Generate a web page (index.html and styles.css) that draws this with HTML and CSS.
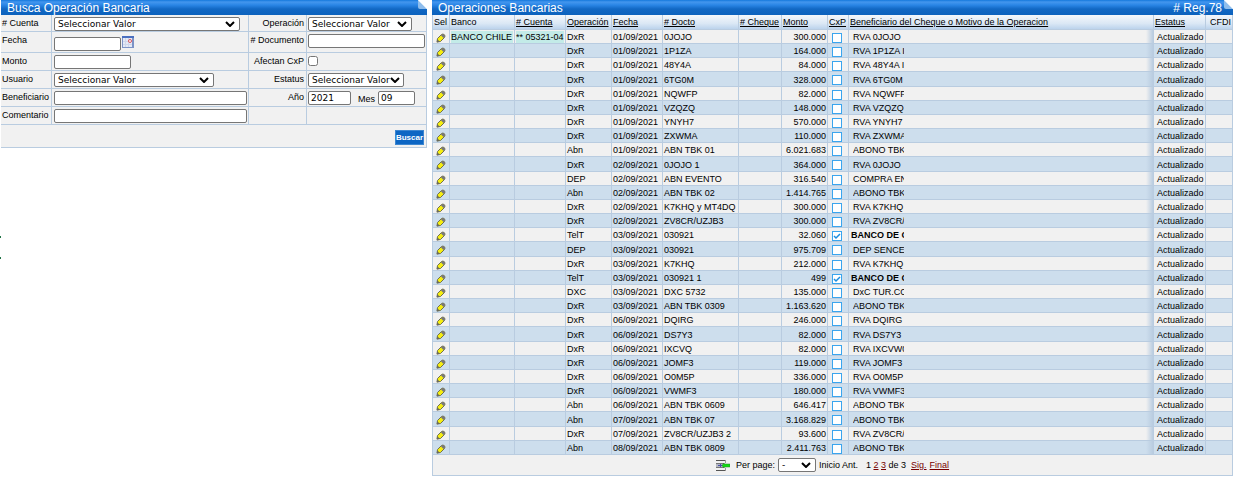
FILE: index.html
```html
<!DOCTYPE html>
<html lang="es">
<head>
    <meta charset="UTF-8">
    <meta name="viewport" content="width=device-width, initial-scale=1.0">
    <title>Operaciones Bancarias</title>
    <link rel="stylesheet" href="styles.css">
</head>
<body>
    <svg class="defs" aria-hidden="true">
        <symbol id="pencil" viewBox="0 0 10 10">
            <path d="M1 9l.5-3.500L5.500 1.500Q7 .5 8.300 1.700T8.500 4.500L4.500 8.500z" fill="#f6ee10" stroke="#6e6e50" stroke-width="1"/>
            <path d="M5.800 1.500Q7 .5 8.300 1.700T8.500 4.200L7.500 5 5 2.500z" fill="#77777c"/>
            <path d="M.7 9.400l.6-3.200 2.500 2.600z" fill="#6b6b5c"/>
        </symbol>
        <symbol id="fold" viewBox="0 0 9 9">
            <path d="M0 0h9v9z" fill="#fff"/>
            <path d="M0 0v7q0 2 2 2h7z" fill="#8fbdec"/>
            <path d="M0 0l9 9" stroke="#d5e7f8" stroke-width="1"/>
        </symbol>
    </svg>
    <div class="page">
        <div class="left">
            <form class="panel">
                <div class="title">
                    <h2>Busca Operación Bancaria</h2>
                    <svg class="fold"><use href="#fold"/></svg>
                </div>
                <table class="search">
                    <tr class="r17">
                        <td class="c1"><label for="cuenta"># Cuenta</label></td>
                        <td class="c2"><select id="cuenta" class="w-cuenta"><option>Seleccionar Valor</option></select></td>
                        <td class="c3"><label for="operacion">Operación</label></td>
                        <td class="c4"><select id="operacion" class="w-oper"><option>Seleccionar Valor</option></select></td>
                    </tr>
                    <tr class="r21">
                        <td class="c1"><label for="fecha">Fecha</label></td>
                        <td class="c2">
                            <div class="line">
                                <input type="text" id="fecha" class="w-fecha">
                                <button type="button" class="cal" aria-label="Calendario">
                                    <svg viewBox="0 0 12 12">
                                        <path d="M0 0h12v12H0z" fill="#7c93c6"/>
                                        <path d="M0 0h12v2H0z" fill="#4a6fc0"/>
                                        <path d="M1 2h9v9H1z" fill="#e4e9f5"/>
                                        <path d="M1 5.500h9M1 8.500h9M3.500 2v9M6.500 2v9" stroke="#cfd7ea" stroke-width="1"/>
                                        <circle cx="8" cy="5" r="1.500" fill="#fff" stroke="#d8545c"/>
                                    </svg>
                                </button>
                            </div>
                        </td>
                        <td class="c3"><label for="documento"># Documento</label></td>
                        <td class="c4"><input type="text" id="documento" class="full"></td>
                    </tr>
                    <tr class="r18">
                        <td class="c1"><label for="monto">Monto</label></td>
                        <td class="c2"><input type="text" id="monto" class="w-monto"></td>
                        <td class="c3"><label for="afectan">Afectan CxP</label></td>
                        <td class="c4"><input type="checkbox" id="afectan" class="chk"></td>
                    </tr>
                    <tr class="r18">
                        <td class="c1"><label for="usuario">Usuario</label></td>
                        <td class="c2"><select id="usuario" class="w-usuario"><option>Seleccionar Valor</option></select></td>
                        <td class="c3"><label for="estatus">Estatus</label></td>
                        <td class="c4"><select id="estatus" class="w-estatus"><option>Seleccionar Valor</option></select></td>
                    </tr>
                    <tr class="r18">
                        <td class="c1"><label for="beneficiario">Beneficiario</label></td>
                        <td class="c2"><input type="text" id="beneficiario" class="full"></td>
                        <td class="c3"><label for="anio">Año</label></td>
                        <td class="c4">
                            <div class="line">
                                <input type="text" id="anio" class="w-anio" value="2021">
                                <label for="mes" class="mes">Mes</label>
                                <input type="text" id="mes" class="w-mes" value="09">
                            </div>
                        </td>
                    </tr>
                    <tr class="r18">
                        <td class="c1"><label for="comentario">Comentario</label></td>
                        <td class="c2"><input type="text" id="comentario" class="full"></td>
                        <td></td>
                        <td></td>
                    </tr>
                    <tr class="r23">
                        <td colspan="4" class="actions"><button type="button" class="btn">Buscar</button></td>
                    </tr>
                </table>
            </form>
            <div class="ticks"><span></span><span></span></div>
        </div>
        <div class="panel right">
            <div class="title">
                <h2>Operaciones Bancarias</h2>
                <span class="reg"># Reg.78</span>
                <svg class="fold"><use href="#fold"/></svg>
            </div>
            <table class="grid">
                <colgroup>
                    <col class="k-sel"><col class="k-banco"><col class="k-cuenta"><col class="k-oper"><col class="k-fecha"><col class="k-docto"><col class="k-cheque"><col class="k-monto"><col class="k-cxp"><col><col class="k-estatus"><col class="k-cfdi">
                </colgroup>
                <thead>
                    <tr>
                        <th>Sel</th>
                        <th>Banco</th>
                        <th><a href="#"># Cuenta</a></th>
                        <th><a href="#">Operación</a></th>
                        <th><a href="#">Fecha</a></th>
                        <th><a href="#"># Docto</a></th>
                        <th><a href="#"># Cheque</a></th>
                        <th><a href="#">Monto</a></th>
                        <th><a href="#">CxP</a></th>
                        <th><a href="#">Beneficiario del Cheque o Motivo de la Operacion</a></th>
                        <th><a href="#">Estatus</a></th>
                        <th class="cfdi">CFDI</th>
                    </tr>
                </thead>
                <tbody id="rows"></tbody>
            </table>
            <div class="pager">
                <button type="button" class="exp" aria-label="Exportar"><svg viewBox="0 0 14 13">
                    <path d="M0 1.500h9M0 11.500h9" stroke="#555" stroke-width="1"/>
                    <path d="M9.500 1v3M9.500 9v3" stroke="#999" stroke-width="1"/>
                    <path d="M0 4h9v5H0z" fill="#b4b8c2"/>
                    <path d="M0 4.500h8M0 8.500h8" stroke="#777" stroke-width="1"/>
                    <path d="M2 6.500h5M4.500 5v3" stroke="#4a4eaa" stroke-width="1"/>
                    <path d="M6 6.500l2-2.500v1h6v3H8v1z" fill="#10dd10" stroke="#2c7d2c" stroke-width=".5"/>
                </svg></button>
                <label for="perpage">Per page:</label>
                <select id="perpage" class="w-page"><option>-</option></select>
                <span class="prev">Inicio Ant.</span>
                <span>1 <a href="#">2</a> <a href="#">3</a> de 3</span>
                <a href="#">Sig.</a>
                <a href="#" class="last">Final</a>
            </div>
        </div>
    </div>
    <script src="rows.js"></script>
</body>
</html>
```
FILE: styles.css
```css
body {
    margin: 0;
    background-color: #fff;
    font-family: "Liberation Sans", Arial, Helvetica, sans-serif;
    font-size: 9px;
    line-height: 12px;
    color: #000;
}
.defs {
    display: none;
}
.page {
    display: flex;
    align-items: flex-start;
    gap: 5px;
    padding-right: 3px;
}
.left {
    flex: none;
    width: 427px;
}
.right {
    flex: 1;
}
.left .panel {
    margin-left: 1px;
}
.panel {
    background-color: #f1f1f1;
}
.title {
    display: flex;
    align-items: flex-start;
    height: 15px;
    background: linear-gradient(#1478dc 0, #4496ee 2px, #2a86e6 5px, #1268c4 9px, #0c62bd 15px);
    color: #fff;
    font-size: 12px;
    line-height: 16px;
}
.title h2 {
    flex: 1;
    margin: 0;
    padding-left: 6px;
    font-size: 12px;
    font-weight: normal;
}
.reg {
    padding-right: 2px;
}
.fold {
    width: 9px;
    height: 9px;
}
table {
    width: 100%;
    border-collapse: separate;
    border-spacing: 0;
    table-layout: fixed;
}
td, th {
    box-sizing: border-box;
    padding: 0;
    border-right: 1px solid #b9cce0;
    border-bottom: 1px solid #b9cce0;
    font-weight: normal;
    text-align: left;
    white-space: nowrap;
}

/* search form */
.search td {
    padding: 2px 1px 0 2px;
    vertical-align: top;
}
.search .c1 {
    width: 51px;
    padding: 2px 0 0 1px;
}
.search .c2 {
    width: 197px;
}
.search .c3 {
    width: 58px;
    padding: 2px 2px 0 0;
    text-align: right;
}
.search .c4 {
    padding-left: 1px;
}
.search label {
    display: block;
}
.r17 td { height: 17px; }
.r18 td { height: 18px; }
.r21 td { height: 21px; }
.r23 td { height: 23px; }
.line {
    display: flex;
    align-items: flex-start;
}
input[type="text"], select {
    box-sizing: border-box;
    display: block;
    margin: 0;
    height: 14px;
    border: 1px solid #767676;
    border-radius: 2px;
    background-color: #fff;
    color: #000;
    font-family: "DejaVu Sans", Verdana, sans-serif;
    font-size: 9px;
    line-height: 12px;
}
input[type="text"] {
    padding: 0 2px;
}
.search select, .w-page {
    height: 14px;
    padding: 0 3px;
    appearance: none;
    line-height: 12px;
    background-image: url("data:image/svg+xml,%3Csvg xmlns='http://www.w3.org/2000/svg' viewBox='0 0 10 6'%3E%3Cpath d='M1 1l4 4 4-4' fill='none' stroke='%23000' stroke-width='2'/%3E%3C/svg%3E");
    background-repeat: no-repeat;
    background-position: right 4px center;
    background-size: 10px 6px;
}
.full { width: 100%; }
.w-cuenta { width: 186px; }
.w-oper { width: 104px; }
.w-fecha { width: 67px; }
.w-monto { width: 77px; }
.w-usuario { width: 160px; }
.w-estatus { width: 96px; }
.w-anio { width: 43px; }
.w-mes { width: 37px; }
.r21 .w-fecha {
    margin-top: 3px;
}
.search .mes {
    padding: 2px 3px 0 7px;
}
.cal, .exp {
    padding: 0;
    border: 0;
    background: none;
}
.cal {
    margin: 2px 0 0 1px;
}
.cal svg {
    display: block;
    width: 12px;
    height: 12px;
}
.chk {
    display: block;
    width: 10px;
    height: 10px;
    margin: 1px 0 0;
}
.search .w-estatus {
    background-position: right 3px center;
}
.search .actions {
    padding: 5px 2px 0 0;
}
.btn {
    display: block;
    margin-left: auto;
    padding: 0;
    height: 15px;
    border: 1px solid #3c86d0;
    background-color: #0c66c4;
    color: #fff;
    font-family: inherit;
    font-size: 8px;
    font-weight: bold;
    line-height: 12px;
}
.ticks {
    display: flex;
    flex-direction: column;
    gap: 19px;
    padding-top: 88px;
}
.ticks span {
    width: 1px;
    height: 2px;
    background-color: #217346;
}

/* operations grid */
.grid {
    border-left: 1px solid #b9cce0;
}
.k-sel { width: 17px; }
.k-banco { width: 65px; }
.k-cuenta { width: 51px; }
.k-oper { width: 46px; }
.k-fecha { width: 51px; }
.k-docto { width: 76px; }
.k-cheque { width: 43px; }
.k-monto { width: 46px; }
.k-cxp { width: 21px; }
.k-estatus { width: 52px; }
.k-cfdi { width: 27px; }
.grid th {
    height: 15px;
    padding-left: 1px;
    background: linear-gradient(#f4f7fb, #dbe8f5 60%, #bcd3ec);
    line-height: 14px;
}
.grid th.cfdi {
    padding-left: 4px;
}
.grid th a {
    color: #000;
}
.grid td {
    height: 14px;
    padding: 1px 1px 0;
    line-height: 12px;
}
.grid tbody tr:nth-child(6n+4) td {
    height: 15px;
}
.grid tbody tr:nth-child(even) {
    background-color: #cddeed;
}
.grid td.sel {
    padding-left: 3px;
}
.sel a, .sel svg {
    display: block;
    width: 10px;
    height: 10px;
}
.sel a {
    margin-top: 1px;
}
.hl {
    display: block;
    height: 12px;
    background-color: #c3ebe8;
    line-height: 12px;
}
.grid td.num {
    text-align: right;
}
.grid td.cxp {
    padding-left: 4px;
}
.cxp input {
    display: block;
    box-sizing: border-box;
    appearance: none;
    width: 10px;
    height: 10px;
    margin: 1px 0 0;
    border: 1px solid #3aa5ee;
    background-color: #fff;
}
.cxp input:checked {
    background-image: url("data:image/svg+xml,%3Csvg xmlns='http://www.w3.org/2000/svg' viewBox='0 0 8 8'%3E%3Cpath d='M1 4l2 2 4-4' fill='none' stroke='%231a8de0' stroke-width='1.500'/%3E%3C/svg%3E");
}
.grid td.benef {
    padding-left: 4px;
    background: linear-gradient(to right, transparent, #b9cce0) right / 7px 100% no-repeat;
}
.benef span {
    display: block;
    width: 51px;
    overflow: hidden;
}
.grid td.benef.strong {
    padding-left: 2px;
    font-weight: bold;
}
.benef.strong span {
    width: 53px;
}
.grid td.est {
    padding-left: 3px;
}

.pager {
    display: flex;
    align-items: center;
    justify-content: center;
    height: 20px;
    border: 1px solid #b9cce0;
    border-top: 0;
    white-space: nowrap;
}
.exp svg {
    display: block;
    width: 14px;
    height: 13px;
}
.exp {
    margin-right: 6px;
}
.w-page {
    width: 38px;
    margin: 0 3px;
}
.prev {
    margin-right: 8px;
}
.pager a {
    color: #700;
}
.pager > a {
    margin-left: 5px;
}
.pager .last {
    margin-left: 3px;
}
```
FILE: rows.js
```js
// operacion, fecha, docto, monto, beneficiario, cxp
const rows = [
    ['DxR', '01/09/2021', '0JOJO', '300.000', 'RVA 0JOJO'],
    ['DxR', '01/09/2021', '1P1ZA', '164.000', 'RVA 1P1ZA I'],
    ['DxR', '01/09/2021', '48Y4A', '84.000', 'RVA 48Y4A I'],
    ['DxR', '01/09/2021', '6TG0M', '328.000', 'RVA 6TG0M'],
    ['DxR', '01/09/2021', 'NQWFP', '82.000', 'RVA NQWFP'],
    ['DxR', '01/09/2021', 'VZQZQ', '148.000', 'RVA VZQZQ'],
    ['DxR', '01/09/2021', 'YNYH7', '570.000', 'RVA YNYH7'],
    ['DxR', '01/09/2021', 'ZXWMA', '110.000', 'RVA ZXWMA'],
    ['Abn', '01/09/2021', 'ABN TBK 01', '6.021.683', 'ABONO TBK'],
    ['DxR', '02/09/2021', '0JOJO 1', '364.000', 'RVA 0JOJO'],
    ['DEP', '02/09/2021', 'ABN EVENTO', '316.540', 'COMPRA EN'],
    ['Abn', '02/09/2021', 'ABN TBK 02', '1.414.765', 'ABONO TBK'],
    ['DxR', '02/09/2021', 'K7KHQ y MT4DQ', '300.000', 'RVA K7KHQ'],
    ['DxR', '02/09/2021', 'ZV8CR/UZJB3', '300.000', 'RVA ZV8CR/'],
    ['TelT', '03/09/2021', '030921', '32.060', 'BANCO DE C', true],
    ['DEP', '03/09/2021', '030921', '975.709', 'DEP SENCE'],
    ['DxR', '03/09/2021', 'K7KHQ', '212.000', 'RVA K7KHQ'],
    ['TelT', '03/09/2021', '030921 1', '499', 'BANCO DE C', true],
    ['DXC', '03/09/2021', 'DXC 5732', '135.000', 'DxC TUR.CO'],
    ['DxR', '03/09/2021', 'ABN TBK 0309', '1.163.620', 'ABONO TBK'],
    ['DxR', '06/09/2021', 'DQIRG', '246.000', 'RVA DQIRG'],
    ['DxR', '06/09/2021', 'DS7Y3', '82.000', 'RVA DS7Y3'],
    ['DxR', '06/09/2021', 'IXCVQ', '82.000', 'RVA IXCVW0'],
    ['DxR', '06/09/2021', 'JOMF3', '119.000', 'RVA JOMF3'],
    ['DxR', '06/09/2021', 'O0M5P', '336.000', 'RVA O0M5P'],
    ['DxR', '06/09/2021', 'VWMF3', '180.000', 'RVA VWMF3'],
    ['Abn', '06/09/2021', 'ABN TBK 0609', '646.417', 'ABONO TBK'],
    ['Abn', '07/09/2021', 'ABN TBK 07', '3.168.829', 'ABONO TBK'],
    ['DxR', '07/09/2021', 'ZV8CR/UZJB3 2', '93.600', 'RVA ZV8CR/'],
    ['Abn', '08/09/2021', 'ABN TBK 0809', '2.411.763', 'ABONO TBK']
];

document.getElementById('rows').innerHTML = rows.map(([oper, fecha, docto, monto, benef, cxp], i) => `
    <tr>
        <td class="sel"><a href="#" aria-label="Editar"><svg><use href="#pencil"/></svg></a></td>
        <td>${i == 0 ? '<span class="hl">BANCO CHILE</span>' : ''}</td>
        <td>${i == 0 ? '<span class="hl">** 05321-04</span>' : ''}</td>
        <td>${oper}</td>
        <td>${fecha}</td>
        <td>${docto}</td>
        <td></td>
        <td class="num">${monto}</td>
        <td class="cxp"><input type="checkbox" aria-label="CxP" ${cxp ? 'checked' : ''}></td>
        <td class="benef ${cxp ? 'strong' : ''}"><span>${benef}</span></td>
        <td class="est">Actualizado</td>
        <td></td>
    </tr>`).join('');
```
